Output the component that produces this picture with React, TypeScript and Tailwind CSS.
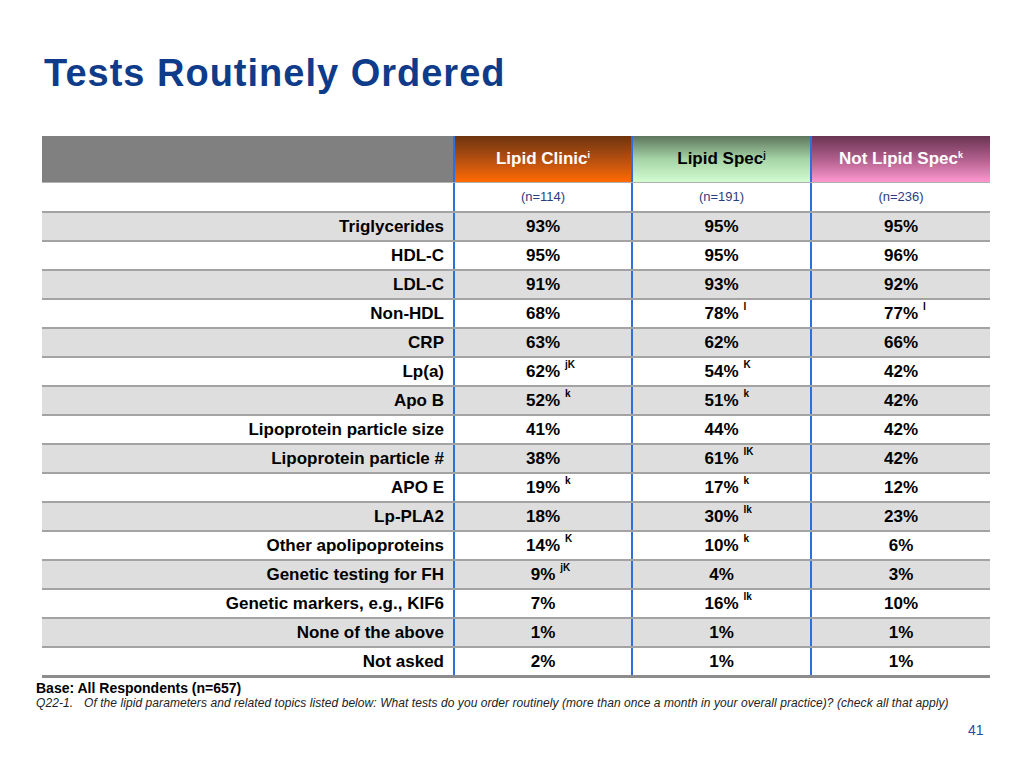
import React from 'react';

type Cell = [string, string?];

const rows: [string, Cell, Cell, Cell][] = [
  ['Triglycerides', ['93%'], ['95%'], ['95%']],
  ['HDL-C', ['95%'], ['95%'], ['96%']],
  ['LDL-C', ['91%'], ['93%'], ['92%']],
  ['Non-HDL', ['68%'], ['78%', 'l'], ['77%', 'l']],
  ['CRP', ['63%'], ['62%'], ['66%']],
  ['Lp(a)', ['62%', 'jK'], ['54%', 'K'], ['42%']],
  ['Apo B', ['52%', 'k'], ['51%', 'k'], ['42%']],
  ['Lipoprotein particle size', ['41%'], ['44%'], ['42%']],
  ['Lipoprotein particle #', ['38%'], ['61%', 'lK'], ['42%']],
  ['APO E', ['19%', 'k'], ['17%', 'k'], ['12%']],
  ['Lp-PLA2', ['18%'], ['30%', 'lk'], ['23%']],
  ['Other apolipoproteins', ['14%', 'K'], ['10%', 'k'], ['6%']],
  ['Genetic testing for FH', ['9%', 'jK'], ['4%'], ['3%']],
  ['Genetic markers, e.g., KIF6', ['7%'], ['16%', 'lk'], ['10%']],
  ['None of the above', ['1%'], ['1%'], ['1%']],
  ['Not asked', ['2%'], ['1%'], ['1%']],
];

const grid = 'grid grid-cols-[411px_178px_179px_180px]';

function Value({ cell }: { cell: Cell }) {
  const [v, sup] = cell;
  return (
    <div className="border-l-2 border-[#2f6fdc] flex items-center justify-center">
      <span className="relative">
        {v}
        {sup && (
          <span className="absolute left-full top-[1px] pl-[5px] text-[10px] leading-none">{sup}</span>
        )}
      </span>
    </div>
  );
}

export default function App() {
  return (
    <div className="w-[1024px] h-[768px] bg-white relative font-['Liberation_Sans',Arial,sans-serif] text-black">
      <h1 className="absolute left-[44px] top-[51px] text-[38px] leading-[44px] tracking-[1px] font-bold text-[#0e3b8a]">
        Tests Routinely Ordered
      </h1>

      <div className="absolute left-[42px] top-[136px] w-[948px]">
        {/* header */}
        <div className={`${grid} h-[47px] border-b border-[#b0b0b0]`}>
          <div className="bg-[#808080]" />
          <div className="border-l-2 border-[#2f6fdc] bg-gradient-to-b from-[#6e3410] to-[#ff6a00] flex items-center justify-center text-white font-bold text-[17px]">
            Lipid Clinic<sup className="text-[9px] font-bold">i</sup>
          </div>
          <div className="border-l-2 border-[#2f6fdc] bg-gradient-to-b from-[#5e765e] via-[#a6d4a6] to-[#d2fcd2] flex items-center justify-center text-black font-bold text-[17px]">
            Lipid Spec<sup className="text-[9px] font-bold">j</sup>
          </div>
          <div className="bg-gradient-to-b from-[#6a3553] via-[#b05f8c] to-[#ff98d0] flex items-center justify-center text-white font-bold text-[17px] border-l-2 border-[#2f6fdc]">
            Not Lipid Spec<sup className="text-[9px] font-bold">k</sup>
          </div>
        </div>
        {/* n row */}
        <div className={`${grid} h-[28px] text-[13px] text-[#2c3d7c]`}>
          <div />
          <div className="border-l-2 border-[#2f6fdc] flex items-center justify-center">(n=114)</div>
          <div className="border-l-2 border-[#2f6fdc] flex items-center justify-center">(n=191)</div>
          <div className="border-l-2 border-[#2f6fdc] flex items-center justify-center">(n=236)</div>
        </div>
        {/* data */}
        <div className="border-b-[3px] border-[#8c8c8c]">
          {rows.map((r, i) => (
            <div
              key={r[0]}
              className={`${grid} h-[29px] border-t-2 border-[#a3a3a3] text-[17px] font-bold ${i % 2 === 0 ? 'bg-[#dedede]' : 'bg-white'}`}
            >
              <div className="flex items-center justify-end pr-[9px]">{r[0]}</div>
              <Value cell={r[1]} />
              <Value cell={r[2]} />
              <Value cell={r[3]} />
            </div>
          ))}
        </div>
      </div>

      <div className="absolute left-[36px] top-[680px] text-[14px] font-bold leading-[16px]">
        Base: All Respondents (n=657)
      </div>
      <div className="absolute left-[36px] top-[696px] text-[12px] italic leading-[14px] tracking-[0.07px] text-[#222] flex">
        <span className="w-[48px]">Q22-1.</span>
        <span>
          Of the lipid parameters and related topics listed below: What tests do you order routinely (more than once a
          month in your overall practice)? (check all that apply)
        </span>
      </div>
      <div className="absolute left-[968px] top-[720px] text-[14px] text-[#1f4f9c]">41</div>
    </div>
  );
}
